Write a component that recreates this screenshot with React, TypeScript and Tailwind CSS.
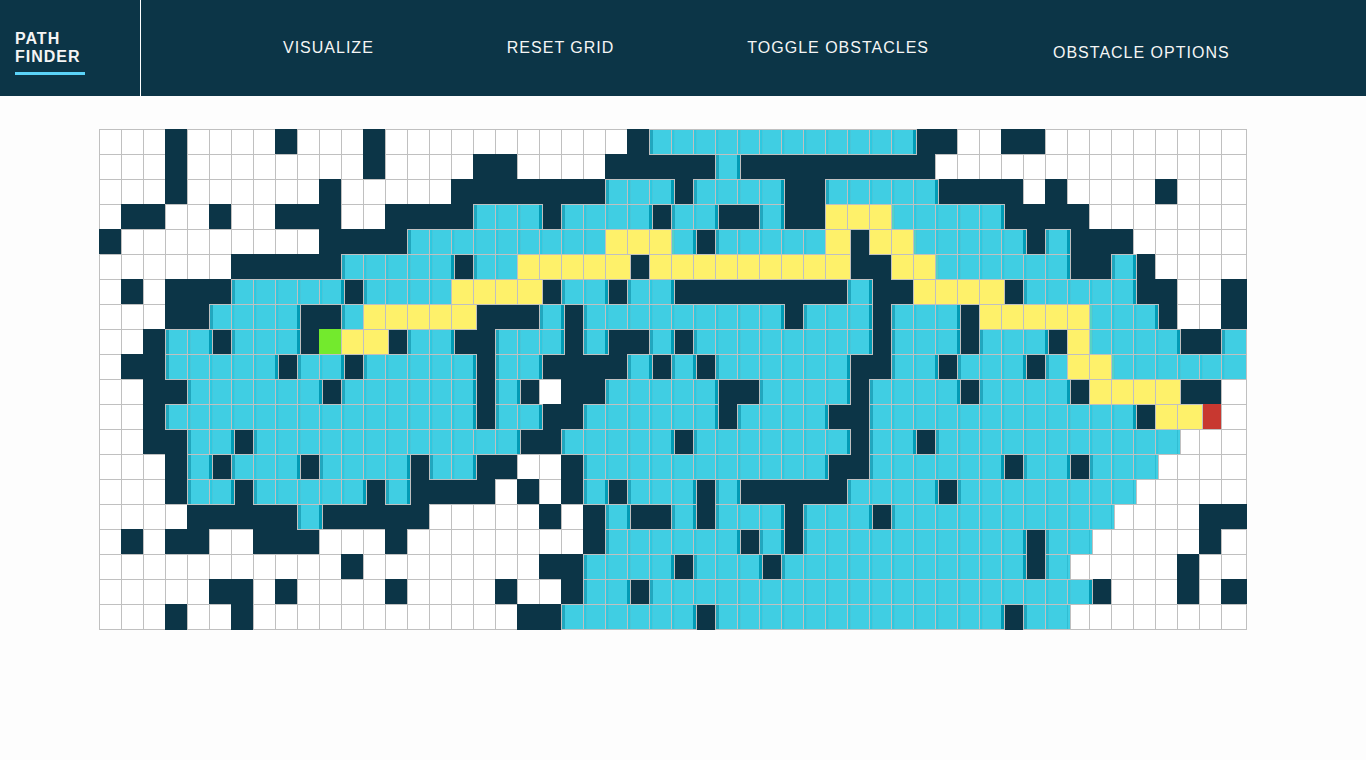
const rows = [
  "3.1#4.1#3.1#11.1#12b2#2.2#9.",
  "3.1#8.1#4.2#4.5#1b9#14.",
  "3.1#6.1#5.7#3b1#4b2#5b4#1.1#4.1#3.",
  "1.2#2.1#2.3#2.4#3b1#4b1#2b2#1b2#3y5b4#7.",
  "1#9.4#9b3y1b1#5b1y1#2y5b1#1b3#5.",
  "6.5#5b1#2b5y1#9y2#2y6b2#1b1#4.",
  "1.1#1.3#5b1#4b4y1#2b1#2b8#1b2#4y1#5b2#2.1#",
  "3.2#4b2#1b5y3#1b1#9b1#3b1#3b1#5y3b1#2.1#",
  "2.1#2b1#3b1#1S2y1#2b2#3b1#1b2#1b1#8b1#3b1#3b1#1y4b2#1b",
  "1.2#5b1#2b1#5b1#2b4#1b1#1b1#6b2#2b1#3b1#1b2y6b",
  "2.2#6b1#6b1#1b1#1.2#5b2#4b1#4b1#4b1#4y2#1.",
  "2.1#14b1#2b2#6b1#4b2#12b1#2y1T1.",
  "2.2#2b1#12b2#5b1#7b1#2b1#11b3.",
  "3.1#1b1#3b1#4b1#2b2#2.1#11b2#6b1#2b1#3b4.",
  "3.1#2b1#5b1#1b4#1.1#1.1#1b1#3b1#1b5#4b1#8b5.",
  "4.5#1b5#5.1#1.1#1b2#1b1#3b1#3b1#10b4.2#",
  "1.1#1.2#2.3#3.1#8.1#6b1#1b1#10b1#2b5.1#1.",
  "11.1#8.2#4b1#3b1#11b1#1b5.1#2.",
  "5.2#1.1#4.1#4.1#2.1#2b1#20b1#3.1#1.1#",
  "3.1#2.1#12.2#6b1#13b1#2b8.",
]

// nodes are wider than their track, so each one runs under the next
const nodeStyles: Record<string, string> = {
  ".": "bg-white border-[#c0c0c0]",
  "#": "bg-[#0c3547] border-[#0c3547]",
  b: "relative z-10 bg-[rgba(0,190,218,0.75)] bg-[linear-gradient(90deg,rgba(255,255,255,0.12)_3px,transparent_3px)] border-[#c0c0c0]",
  y: "relative z-10 bg-[#fef16a] border-[#c0c0c0]",
  S: "bg-[#73ea2d] border-[#73ea2d]",
  T: "bg-[#c83830] border-[#c83830]",
}

const parseRow = (row: string) => {
  const cells: string[] = []
  for (const [, count, kind] of row.matchAll(/(\d+)(.)/g)) {
    for (let i = 0; i < Number(count); i++) cells.push(kind)
  }
  return cells
}

const Header = () => {
  return (
    <header className="flex h-24 bg-[#0c3547] text-[#f5f5f5]">
      <div className="w-[141px] shrink-0 border-r border-white pl-[15px] pt-[30px]">
        <div className="w-[70px] border-b-[3px] border-[#5bd3f8] pb-[6px] text-base font-bold leading-[18px] tracking-[1px]">
          PATH
          <br />
          FINDER
        </div>
      </div>
      <nav className="flex items-center pl-[142px] text-base tracking-[1px]">
        <span className="mr-[133px]">VISUALIZE</span>
        <span className="mr-[133px]">RESET GRID</span>
        <span className="mr-[124px]">TOGGLE OBSTACLES</span>
        <span className="mt-[10px]">OBSTACLE OPTIONS</span>
      </nav>
    </header>
  )
}

const App = () => {
  return (
    <div className="min-h-[760px] bg-[#fdfdfd] font-['Liberation_Sans',Arial,sans-serif]">
      <Header />
      <main className="pl-[99px] pt-[33px]">
        <div className="grid grid-cols-[repeat(52,22px)] grid-rows-[repeat(20,25px)]">
          {rows.flatMap((row, r) =>
            parseRow(row).map((kind, c) => (
              <div key={`${r}-${c}`} className={`h-[26px] w-[26px] border ${nodeStyles[kind]}`} />
            )),
          )}
        </div>
      </main>
    </div>
  )
}

export default App
